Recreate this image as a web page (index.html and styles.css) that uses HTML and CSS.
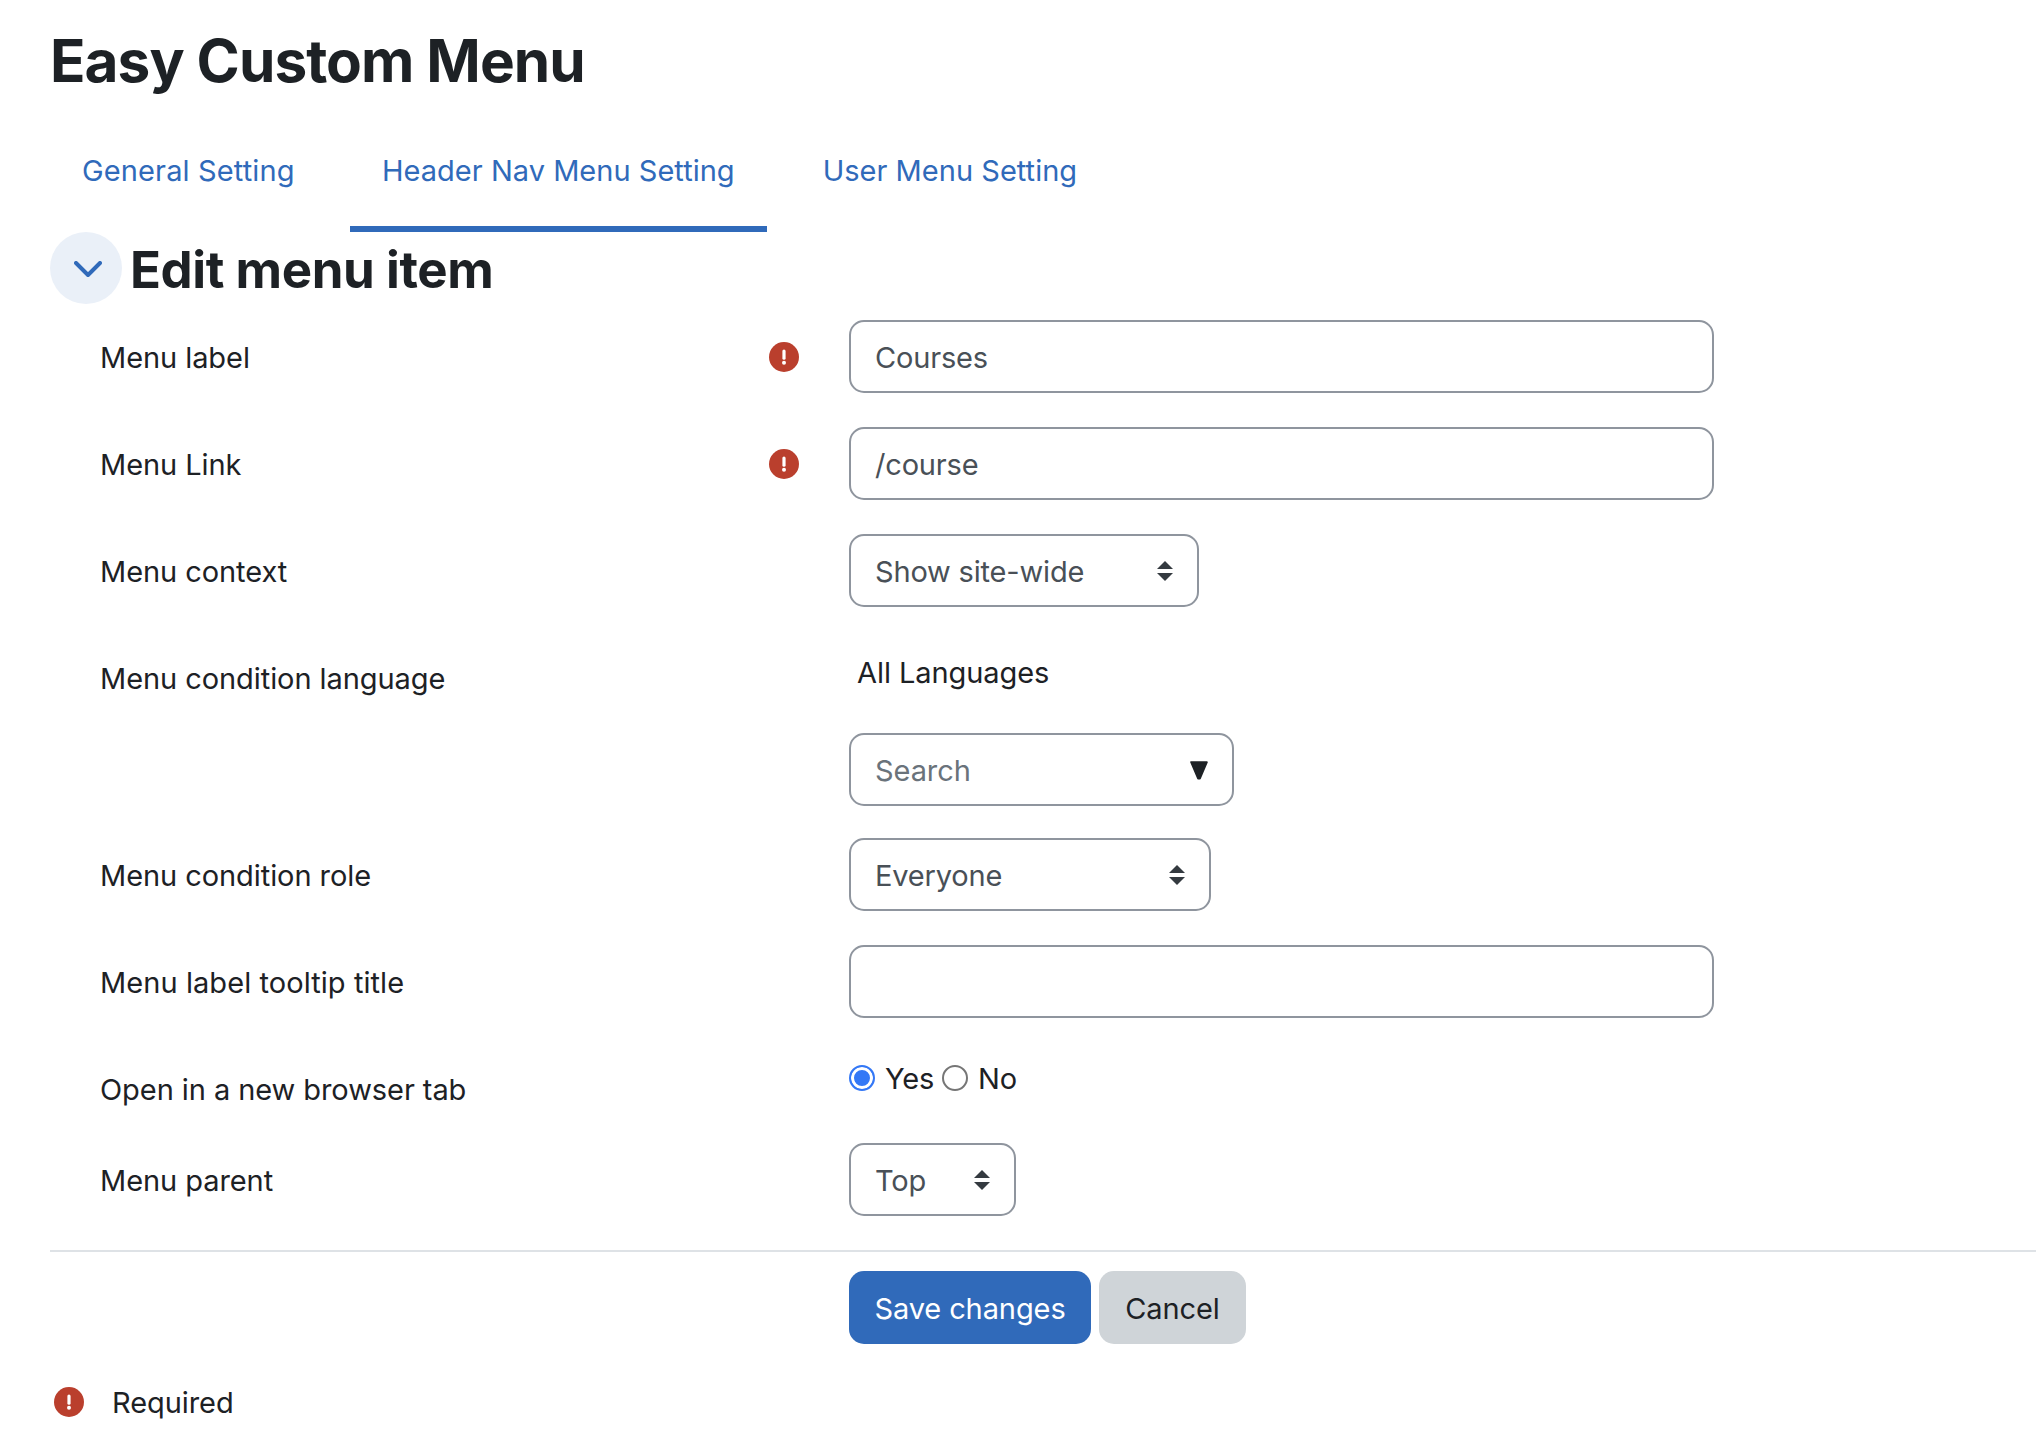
FILE: index.html
```html
<!DOCTYPE html>
<html lang="en">
<head>
<meta charset="utf-8">
<title>Easy Custom Menu</title>
<link rel="stylesheet" href="styles.css">
</head>
<body>
<svg class="sprite" aria-hidden="true">
  <symbol id="alert" viewBox="0 0 30 30">
    <circle cx="15" cy="15" r="15" fill="#ba3f2d"/>
    <path d="M15 9v7.2" stroke="#fff" stroke-width="3.2" stroke-linecap="round"/>
    <circle cx="15" cy="20.8" r="2" fill="#fff"/>
  </symbol>
  <symbol id="sort" viewBox="0 0 16 20">
    <path d="M8 0l8 8H0zM8 20l8-8H0z" fill="#343a40"/>
  </symbol>
</svg>
<main class="page">
  <h1 class="page-title">Easy Custom Menu</h1>
  <nav class="tabs">
    <a class="tab tab-first">General Setting</a>
    <a class="tab tab-active">Header Nav Menu Setting</a>
    <a class="tab">User Menu Setting</a>
  </nav>
  <header class="section-head">
    <span class="toggle"><svg width="28" height="18" viewBox="0 0 28 18"><path d="M2 2l12 12L26 2" fill="none" stroke="#306aba" stroke-width="4" stroke-linecap="round" stroke-linejoin="round"/></svg></span>
    <h2 class="section-title">Edit menu item</h2>
  </header>
  <form class="form">
    <div class="row">
      <div class="label"><span>Menu label</span><svg class="alert"><use href="#alert"/></svg></div>
      <div class="control wide"><span>Courses</span></div>
    </div>
    <div class="row">
      <div class="label"><span>Menu Link</span><svg class="alert"><use href="#alert"/></svg></div>
      <div class="control wide"><span>/course</span></div>
    </div>
    <div class="row">
      <div class="label"><span>Menu context</span></div>
      <div class="control select-context"><span>Show site-wide</span><svg class="sort"><use href="#sort"/></svg></div>
    </div>
    <div class="row row-language">
      <div class="label"><span>Menu condition language</span></div>
      <div class="stack">
        <div class="selection"><span>All Languages</span></div>
        <div class="control search"><span>Search</span><svg class="caret" viewBox="0 0 18 19"><path d="M1.2 1.2h15.6L9.9 17.4H8.1z" fill="#1d2125" stroke="#1d2125" stroke-width="2" stroke-linejoin="round"/></svg></div>
      </div>
    </div>
    <div class="row">
      <div class="label"><span>Menu condition role</span></div>
      <div class="control select-role"><span>Everyone</span><svg class="sort"><use href="#sort"/></svg></div>
    </div>
    <div class="row">
      <div class="label label-tooltip"><span>Menu label tooltip title</span></div>
      <div class="control wide"></div>
    </div>
    <div class="row row-radio">
      <div class="label"><span>Open in a new browser tab</span></div>
      <div class="radios">
        <label class="radio"><i class="dot dot-on"></i><span>Yes</span></label>
        <label class="radio"><i class="dot"></i><span>No</span></label>
      </div>
    </div>
    <div class="row row-last">
      <div class="label"><span>Menu parent</span></div>
      <div class="control select-parent"><span>Top</span><svg class="sort"><use href="#sort"/></svg></div>
    </div>
    <div class="actions">
      <button type="button" class="btn btn-save">Save changes</button>
      <button type="button" class="btn btn-cancel">Cancel</button>
    </div>
  </form>
  <footer class="required"><svg class="alert"><use href="#alert"/></svg><span>Required</span></footer>
</main>
</body>
</html>
```
FILE: styles.css
```css
* { box-sizing: border-box; }
body {
  margin: 0;
  background: #fff;
  color: #1d2125;
  font: 29px/44px Inter, "Liberation Sans", sans-serif;
  letter-spacing: -0.07px;
}
.sprite { display: none; }
.page { padding: 25px 0 0 50px; }
h1, h2 { margin: 0; font-weight: 700; }
.page-title {
  height: 101px;
  font-size: 58.5px;
  line-height: 72px;
  letter-spacing: -0.95px;
  white-space: nowrap;
}
.tabs { display: flex; gap: 24px; height: 106px; letter-spacing: 0.02px; }
.tab {
  height: 106px;
  padding: 23px 32px 0;
  border-bottom: 6px solid transparent;
  color: #306aba;
  white-space: nowrap;
}
.tab-first { width: 276px; letter-spacing: 0.13px; }
.tab-active { border-color: #306aba; }
.section-head { display: flex; align-items: center; gap: 8px; height: 72px; }
.toggle {
  display: flex;
  align-items: center;
  justify-content: center;
  width: 72px;
  height: 72px;
  padding: 4px 0 0 4px;
  border-radius: 50%;
  background: #eaf0f8;
}
.section-title {
  padding-top: 3px;
  font-size: 51px;
  line-height: 72px;
  letter-spacing: -0.42px;
  white-space: nowrap;
}
.form { padding-top: 16px; }
.row { display: flex; align-items: flex-start; height: 107px; }
.row-language { height: 197px; }
.row-radio { height: 91px; }
.label {
  display: flex;
  justify-content: space-between;
  align-items: center;
  width: 799px;
  height: 73px;
  padding: 1px 50px 0 50px;
  white-space: nowrap;
}
.label-tooltip { letter-spacing: 0.07px; }
.label span, .control span, .required span, .radio span { padding-top: 2px; }
.alert { width: 30px; height: 30px; }
.control {
  display: flex;
  justify-content: space-between;
  align-items: center;
  height: 73px;
  padding: 1px 24px 0;
  border: 2px solid #8f959e;
  border-radius: 15px;
  color: #495057;
  letter-spacing: -0.18px;
  white-space: nowrap;
}
.wide { width: 865px; }
.select-context { width: 350px; }
.select-role { width: 362px; }
.select-parent { width: 167px; }
.search { width: 385px; color: #6a737b; letter-spacing: -0.07px; }
.sort { width: 16px; height: 20px; }
.caret { width: 18px; height: 19px; }
.selection { height: 92px; padding: 10px 0 0 8px; }
.radios { display: flex; gap: 8px; padding-top: 3px; letter-spacing: -0.2px; }
.radio { display: flex; align-items: center; gap: 10px; }
.dot { width: 26px; height: 26px; border: 2px solid #767676; border-radius: 50%; }
.dot-on {
  border-color: #3478f6;
  background: #3478f6;
  box-shadow: inset 0 0 0 3px #fff;
}
.actions {
  display: flex;
  gap: 8px;
  padding: 19px 0 0 799px;
  border-top: 2px solid #dee2e6;
}
.btn {
  height: 73px;
  padding: 3px 0 0;
  border: 0;
  border-radius: 15px;
  font: inherit;
  letter-spacing: -0.1px;
}
.btn-save { width: 242px; background: #306aba; color: #fff; }
.btn-cancel { width: 147px; background: #cfd4d8; color: #1d2125; }
.required { display: flex; align-items: center; gap: 28px; padding: 35px 0 0 4px; }
```
